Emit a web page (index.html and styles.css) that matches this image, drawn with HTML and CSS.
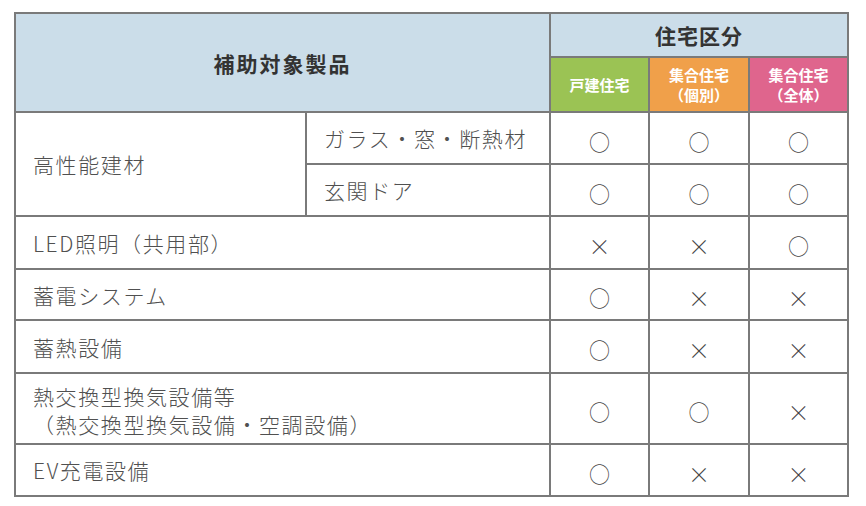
FILE: index.html
```html
<!DOCTYPE html>
<html lang="ja">
<head>
<meta charset="utf-8">
<link rel="stylesheet" href="styles.css">
</head>
<body>
<table class="subsidy">
  <colgroup>
    <col class="c-cat">
    <col class="c-sub">
    <col class="c-mark">
    <col class="c-mark2">
    <col class="c-mark">
  </colgroup>
  <thead>
    <tr class="h1">
      <th class="head-main wide" colspan="2" rowspan="2">補助対象製品</th>
      <th class="head-main" colspan="3">住宅区分</th>
    </tr>
    <tr class="h2">
      <th class="kind green">戸建住宅</th>
      <th class="kind orange">集合住宅<br>（個別）</th>
      <th class="kind pink">集合住宅<br>（全体）</th>
    </tr>
  </thead>
  <tbody>
    <tr class="r52">
      <td class="name" rowspan="2">高性能建材</td>
      <td class="name">ガラス・窓・断熱材</td>
      <td class="mark">○</td><td class="mark">○</td><td class="mark">○</td>
    </tr>
    <tr class="r52">
      <td class="name">玄関ドア</td>
      <td class="mark">○</td><td class="mark">○</td><td class="mark">○</td>
    </tr>
    <tr class="r53">
      <td class="name" colspan="2">LED照明（共用部）</td>
      <td class="mark x">×</td><td class="mark x">×</td><td class="mark">○</td>
    </tr>
    <tr class="r51">
      <td class="name" colspan="2">蓄電システム</td>
      <td class="mark">○</td><td class="mark x">×</td><td class="mark x">×</td>
    </tr>
    <tr class="r53">
      <td class="name" colspan="2">蓄熱設備</td>
      <td class="mark">○</td><td class="mark x">×</td><td class="mark x">×</td>
    </tr>
    <tr class="r71">
      <td class="name tall" colspan="2">熱交換型換気設備等<br>（熱交換型換気設備・空調設備）</td>
      <td class="mark">○</td><td class="mark">○</td><td class="mark x">×</td>
    </tr>
    <tr class="r52">
      <td class="name" colspan="2">EV充電設備</td>
      <td class="mark">○</td><td class="mark x">×</td><td class="mark x">×</td>
    </tr>
  </tbody>
</table>
</body>
</html>
```

FILE: styles.css
```css
html, body {
  margin: 0;
  padding: 0;
  background: #ffffff;
}

body {
  padding: 12px 0 0 14px;
  font-family: "Noto Sans CJK JP", "Noto Sans", sans-serif;
}

.subsidy {
  border-collapse: collapse;
  table-layout: fixed;
  width: 835px;
}

.c-cat { width: 291px; }
.c-sub { width: 244px; }
.c-mark { width: 99px; }
.c-mark2 { width: 100px; }

.subsidy th,
.subsidy td {
  border: 2px solid #7a7a7a;
  padding: 0;
}

.h1 { height: 44px; }
.h2 { height: 55px; }

.head-main {
  background: #cbdde9;
  color: #333333;
  font-size: 21px;
  font-weight: 700;
  letter-spacing: 1px;
  line-height: 26px;
  text-align: center;
  vertical-align: middle;
}

.head-main.wide {
  letter-spacing: 2px;
}

.kind {
  color: #ffffff;
  font-size: 15px;
  font-weight: 700;
  line-height: 20px;
  text-align: center;
  vertical-align: middle;
}

.green { background: #9bc354; }
.orange { background: #f0a04a; }
.pink { background: #df658d; }

.r51 { height: 51px; }
.r52 { height: 52px; }
.r53 { height: 53px; }
.r71 { height: 71px; }

.name {
  color: #505050;
  font-size: 21px;
  font-weight: 300;
  letter-spacing: 1.6px;
  line-height: 28px;
  padding-left: 17px !important;
  text-align: left;
  vertical-align: middle;
}

.name.tall {
  line-height: 28px;
  padding-top: 2px !important;
}

.mark {
  color: #444444;
  font-size: 21px;
  font-weight: 300;
  text-align: center;
  vertical-align: middle;
  padding-top: 5px !important;
}

.mark.x {
  font-size: 22px;
}
```
